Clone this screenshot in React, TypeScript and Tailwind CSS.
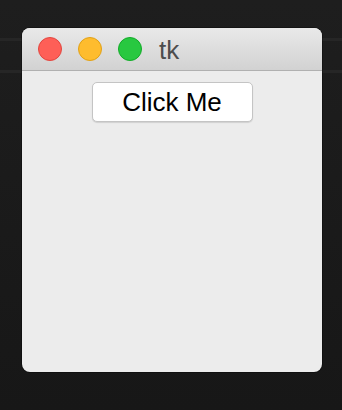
export default function App() {
  return (
    <div className="relative w-[342px] h-[410px] bg-gradient-to-b from-[#1e1e1e] to-[#171717] overflow-hidden" style={{ fontFamily: '"Helvetica Neue", "Liberation Sans", Arial, sans-serif' }}>
      <div className="absolute left-0 right-0 top-[38px] h-[3px] bg-[#262626]" />
      <div className="absolute left-0 right-0 top-[70px] h-[3px] bg-[#262626]" />
      <div className="absolute left-[22px] top-[28px] w-[300px] h-[344px] rounded-[8px] overflow-hidden bg-[#ececec] flex flex-col shadow-[0_0_0_1px_rgba(0,0,0,0.3)]">
        <div className="h-[43px] shrink-0 bg-gradient-to-b from-[#e9e9e9] to-[#d2d2d2] border-b border-[#b0b0b0] flex items-center pl-[16px]">
          <div className="w-[24px] h-[24px] rounded-full bg-[#fe5f57] border border-[#e2463f]" />
          <div className="w-[24px] h-[24px] rounded-full bg-[#febc2e] border border-[#e1a116] ml-[16px]" />
          <div className="w-[24px] h-[24px] rounded-full bg-[#28c840] border border-[#12ac28] ml-[16px]" />
          <span className="ml-[17px] text-[26px] text-[#4d4d4d] leading-none mt-[1px]">tk</span>
        </div>
        <div className="flex justify-center pt-[11px]">
          <div className="w-[161px] h-[40px] bg-white border border-[#c4c4c4] rounded-[5px] shadow-[0_1px_1px_rgba(0,0,0,0.12)] flex items-center justify-center text-[26px] text-black leading-none pb-[1px]">
            Click Me
          </div>
        </div>
      </div>
    </div>
  );
}
